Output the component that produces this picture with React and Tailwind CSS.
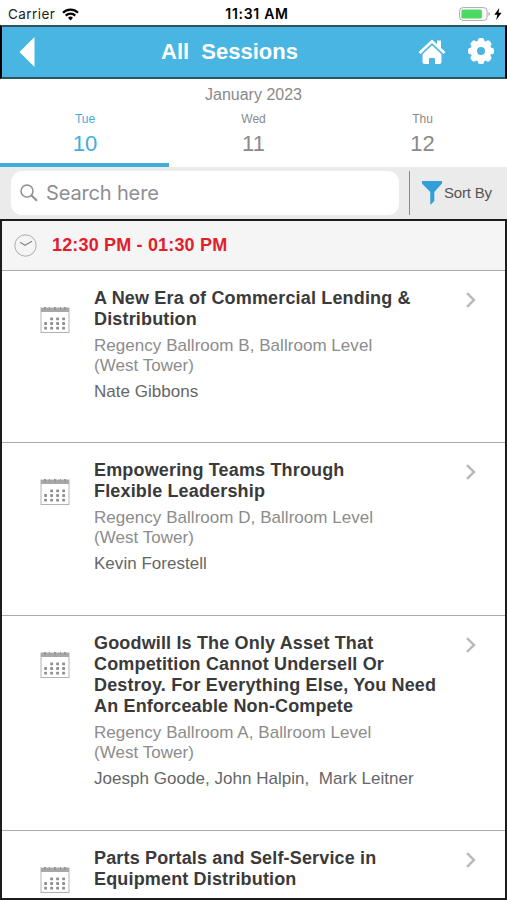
const days = [
  { name: 'Tue', date: '10', active: true },
  { name: 'Wed', date: '11' },
  { name: 'Thu', date: '12' },
]

const sessions = [
  {
    title: ['A New Era of Commercial Lending &', 'Distribution'],
    room: ['Regency Ballroom B, Ballroom Level', '(West Tower)'],
    speakers: 'Nate Gibbons',
    height: 'h-[172px]',
  },
  {
    title: ['Empowering Teams Through', 'Flexible Leadership'],
    room: ['Regency Ballroom D, Ballroom Level', '(West Tower)'],
    speakers: 'Kevin Forestell',
    height: 'h-[173px]',
  },
  {
    title: [
      'Goodwill Is The Only Asset That',
      'Competition Cannot Undersell Or',
      'Destroy. For Everything Else, You Need',
      'An Enforceable Non-Compete',
    ],
    room: ['Regency Ballroom A, Ballroom Level', '(West Tower)'],
    speakers: 'Joesph Goode, John Halpin,  Mark Leitner',
    height: 'h-[215px]',
  },
  {
    title: ['Parts Portals and Self-Service in', 'Equipment Distribution'],
    height: 'h-[67px]',
  },
]

function StatusBar() {
  return (
    <div className="grid h-[25px] shrink-0 grid-cols-3 items-center px-2 pt-[3px] font-['Inter','Roboto',sans-serif] text-[13px] text-[#222]">
      <div className="flex items-center gap-[7px]">
        <span className="w-[47px] text-[13.5px] tracking-[0.45px]">Carrier</span>
        <svg width="17" height="13" viewBox="0 0 17 13" fill="none" stroke="#000" strokeWidth="2.2">
          <path d="M1 4.7a10.6 10.6 0 0 1 15 0" />
          <path d="M3.7 7.6a6.8 6.8 0 0 1 9.6 0" />
          <path d="M6 9.8a3.6 3.6 0 0 1 5 0L8.5 12.5z" fill="#000" stroke="none" />
        </svg>
      </div>
      <div className="-mt-px pl-[7px] text-center text-[14px] font-semibold tracking-[0.7px] whitespace-nowrap text-black">
        11:31 AM
      </div>
      <div className="-mt-px -mr-[3px] flex items-center justify-end gap-[3px]">
        <svg width="32" height="14" viewBox="0 0 32 14">
          <rect x="0.6" y="0.6" width="27.5" height="12.8" rx="3.5" fill="#fff" stroke="#aaa" />
          <rect x="2.4" y="2.4" width="20.5" height="9.2" rx="1.5" fill="#4cd964" />
          <path d="M29.5 5v4q1.5-.6 1.5-2t-1.5-2z" fill="#aaa" />
        </svg>
        <svg width="8" height="12" viewBox="0 0 8 12">
          <path d="M5.3 0 .3 6.8h3L2.2 12l5.4-7.2H4.5z" fill="#000" />
        </svg>
      </div>
    </div>
  )
}

function Header() {
  return (
    <header className="flex h-[54px] shrink-0 items-center border-2 border-t-[#31525f] border-r-black border-b-[#31525f] border-l-black bg-[#49b5e2] text-white">
      <svg className="ml-[17px]" width="16" height="30" viewBox="0 0 16 30">
        <path d="M0.5 15 15.5 0v30z" fill="#fff" />
      </svg>
      <h1 className="ml-[126px] w-[138px] text-[22px] leading-6 font-bold whitespace-pre">All  Sessions</h1>
      <svg className="ml-[119px]" width="28" height="26" viewBox="0 0 28 26">
        <path d="M1.5 14 14 2.3 26.5 14" fill="none" stroke="#fff" strokeWidth="2.8" />
        <path d="M19 1.5h4v8l-4-3.5z" fill="#fff" />
        <path d="M4.5 15.2 14 6.3l9.5 8.9V23q0 2-2 2H17v-5q0-1-1-1h-4q-1 0-1 1v5H6.5q-2 0-2-2z" fill="#fff" />
      </svg>
      <svg className="-mt-[2px] ml-[21px]" width="28" height="28" viewBox="0 0 28 28">
        <g fill="#fff">
          <rect x="10.8" y="1" width="6.4" height="26" rx="2.2" />
          <rect x="10.8" y="1" width="6.4" height="26" rx="2.2" transform="rotate(45 14 14)" />
          <rect x="10.8" y="1" width="6.4" height="26" rx="2.2" transform="rotate(90 14 14)" />
          <rect x="10.8" y="1" width="6.4" height="26" rx="2.2" transform="rotate(135 14 14)" />
          <circle cx="14" cy="14" r="10.5" />
        </g>
        <circle cx="14" cy="14" r="4" fill="#49b5e2" />
      </svg>
    </header>
  )
}

function DatePicker() {
  return (
    <div className="flex h-[88px] shrink-0 flex-col bg-white text-[#8a8a8a]">
      <div className="pt-[6px] text-center text-[16px] leading-5">January 2023</div>
      <div className="grid flex-1 grid-cols-3">
        {days.map(day => (
          <div
            key={day.date}
            className={
              day.active
                ? 'flex flex-col items-center border-b-4 border-[#41addb] pt-[6px] pl-px text-[#41addb]'
                : 'flex flex-col items-center border-b-4 border-transparent pt-[6px]'
            }
          >
            <span className="text-[12px] leading-4">{day.name}</span>
            <span className="mt-[3px] text-[22px] leading-7">{day.date}</span>
          </div>
        ))}
      </div>
    </div>
  )
}

function SearchBar() {
  return (
    <div className="flex h-[52px] shrink-0 items-center bg-[#ebebeb]">
      <div className="ml-[11px] flex h-[44px] w-[388px] items-center rounded-[11px] bg-white">
        <svg className="ml-[9px]" width="18" height="18" viewBox="0 0 18 18" fill="none" stroke="#8e8e93" strokeWidth="1.5">
          <circle cx="7" cy="7" r="6" />
          <path d="m11.3 11.3 5.7 5.5" strokeWidth="2" />
        </svg>
        <span className="-mt-px ml-[8px] font-['Inter','Roboto',sans-serif] text-[20px] tracking-[-0.15px] text-[#8e8e93]">
          Search here
        </span>
      </div>
      <div className="ml-[10px] h-[44px] w-px bg-[#888]" />
      <svg className="ml-[12px]" width="20" height="24" viewBox="0 0 20 24">
        <path d="M0 0h20v2.5L12.3 11v9l-4 4V11L0 2.5z" fill="#309fda" />
      </svg>
      <span className="ml-[2px] text-[15px] tracking-[-0.2px] whitespace-nowrap text-[#555]">Sort By</span>
    </div>
  )
}

function CalendarIcon() {
  const dots = []
  for (let row = 0; row < 3; row++) {
    for (let col = row === 0 ? 1 : 0; col < 4; col++) {
      dots.push(<rect key={`${row}-${col}`} x={4.2 + col * 6} y={11.5 + row * 4.6} width="2.8" height="2.8" rx="0.6" />)
    }
  }
  return (
    <svg width="30" height="28" viewBox="0 0 30 28" fill="#8e8e8e">
      <rect x="1" y="2" width="28" height="24.5" fill="#fff" stroke="#b3b3b3" />
      <rect x="1" y="2" width="28" height="4" fill="#a8a8a8" />
      <path d="M4 1h2v3H4zM9 1h1v3H9zM14 1h2v3h-2zM20 1h1v3h-1zM24 1h2v3h-2z" fill="#999" />
      {dots}
    </svg>
  )
}

function SessionRow({ session }) {
  return (
    <li className={`${session.height} flex shrink-0 border-b border-[#aaa] pt-[17px] last:border-b-0`}>
      <div className="ml-[38px] w-[30px] pt-[18px]">
        <CalendarIcon />
      </div>
      <div className="ml-6 w-[360px] whitespace-pre">
        <div className="text-[18px] leading-[21px] font-bold tracking-[0.16px] text-[#3a3a3a]">
          {session.title.map(line => (
            <div key={line}>{line}</div>
          ))}
        </div>
        {session.room && (
          <div className="mt-[6px] text-[17px] leading-5 tracking-[0.04px] text-[#8c8c8c]">
            {session.room.map(line => (
              <div key={line}>{line}</div>
            ))}
          </div>
        )}
        {session.speakers && (
          <div className="mt-[6px] text-[17px] leading-5 tracking-[0.03px] text-[#666]">{session.speakers}</div>
        )}
      </div>
      <svg className="mt-[4px] ml-[11px]" width="12" height="16" viewBox="0 0 12 16">
        <path d="m2 1.2 7 6.8-7 6.8" fill="none" stroke="#bababa" strokeWidth="2.5" />
      </svg>
    </li>
  )
}

export default function App() {
  return (
    <div className="flex h-[900px] w-[507px] flex-col overflow-hidden bg-white font-['Liberation_Sans',Arial,sans-serif]">
      <StatusBar />
      <Header />
      <DatePicker />
      <SearchBar />
      <main className="flex min-h-0 flex-1 flex-col overflow-hidden border-2 border-[#1c1c1c]">
        <div className="flex h-[50px] shrink-0 items-center border-b border-[#aaa] bg-[#f5f5f5]">
          <svg className="ml-[12px]" width="23" height="23" viewBox="0 0 23 23" fill="none" stroke="#aaa">
            <circle cx="11.5" cy="11.5" r="10.7" />
            <path d="m6 8.3 5 3 7-4" stroke="#888" strokeWidth="1.2" />
          </svg>
          <span className="ml-[15px] text-[18px] font-bold tracking-[0.17px] whitespace-nowrap text-[#e2202c]">
            12:30 PM - 01:30 PM
          </span>
        </div>
        <ul className="flex flex-col">
          {sessions.map(session => (
            <SessionRow key={session.title[0]} session={session} />
          ))}
        </ul>
      </main>
    </div>
  )
}
